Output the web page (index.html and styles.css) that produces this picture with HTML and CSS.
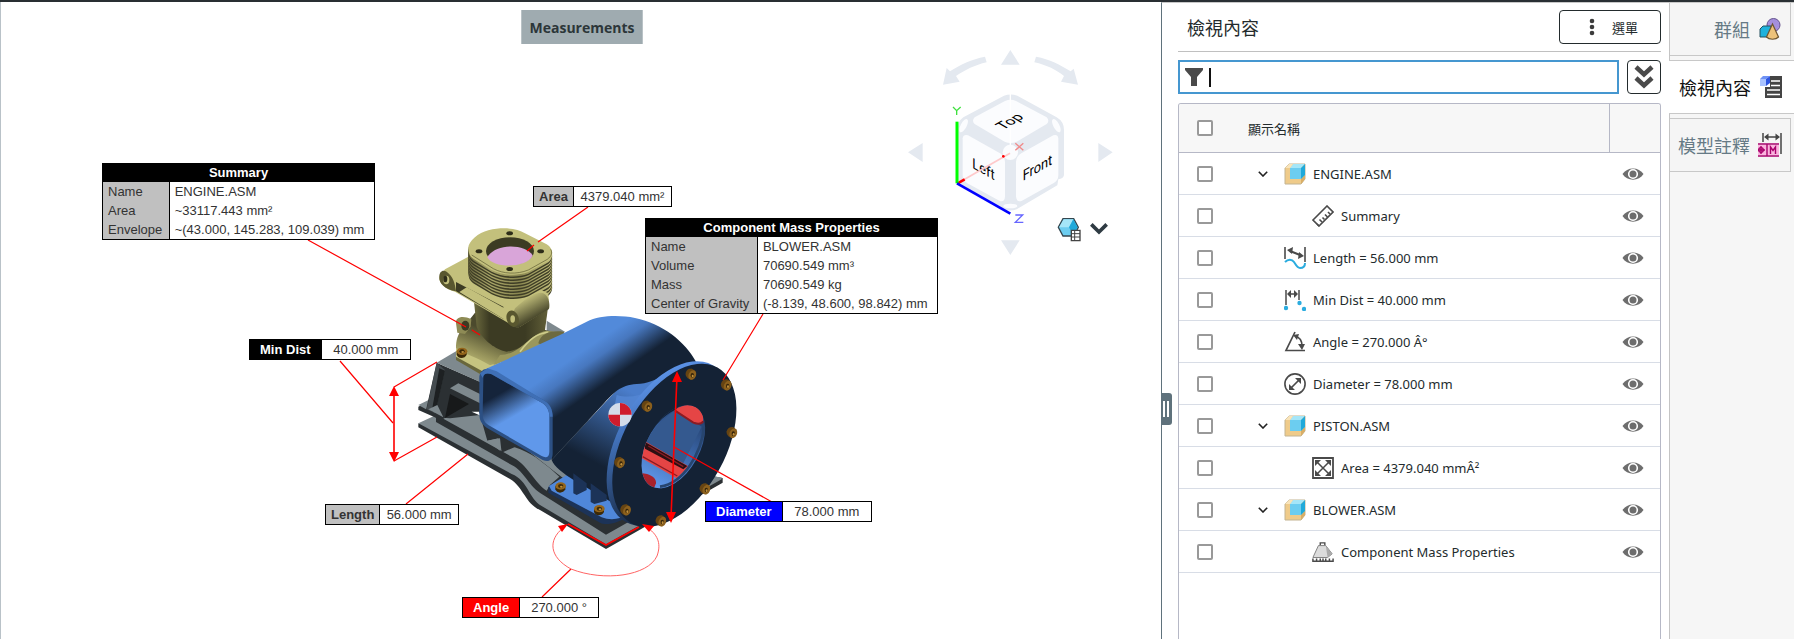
FILE: index.html
```html
<!DOCTYPE html>
<html lang="zh-Hant">
<head>
<meta charset="utf-8">
<title>檢視內容</title>
<link rel="stylesheet" href="styles.css">
</head>
<body>
<svg class="defs" aria-hidden="true">
  <symbol id="i-asm" viewBox="0 0 22 22">
    <path d="M1 5 5 1h16v15l-4 5H1z" fill="#efcb8a" stroke="#c3b492"/>
    <path d="M17 16l4-4v4l-4 5z" fill="#d9ae66"/>
    <path d="M6 5 9 1h12l-4 4z" fill="#a5e6f8"/>
    <path d="M6 5h11v11H6z" fill="#6ccdf0"/>
    <path d="M17 5l4-4v11l-4 4z" fill="#1fa9da"/>
    <path d="M1 5 5 1h4L6 5z" fill="#f9e4ba"/>
  </symbol>
  <symbol id="i-ruler" viewBox="0 0 22 22">
    <g fill="none" stroke="#4a4a4a" stroke-width="1.6">
      <path d="M1 15 15 1l6 6L7 21z"/>
      <path d="M7 21l-2-2M10 17l-2.500-2.500M12.500 14.500l-2-2M15.500 12l-2.500-2.500M18 9l-2-2" />
    </g>
  </symbol>
  <symbol id="i-length" viewBox="0 0 22 22">
    <path d="M1 0v12M21 0v15" stroke="#4a4a4a" stroke-width="1.6"/>
    <path d="M6 4l10 4" stroke="#4a4a4a" stroke-width="2"/>
    <path d="M3 3l6-3-1 7zM20 9l-6 3 1-7z" fill="#4a4a4a"/>
    <path d="M1 15c3-3 7-3 9 0s3 6 6 6 5-2 5-5" fill="none" stroke="#2bacdf" stroke-width="2"/>
  </symbol>
  <symbol id="i-dist" viewBox="0 0 22 22">
    <path d="M2 1v15M15 1v10M5 5h8" stroke="#4a4a4a" stroke-width="1.5"/>
    <path d="M3 5l4-4v8zM14 5l-4-4v8z" fill="#4a4a4a"/>
    <g fill="#2bacdf"><circle cx="2" cy="19" r="2.200"/><circle cx="15.500" cy="14" r="2.200"/><circle cx="20" cy="20" r="2.200"/></g>
  </symbol>
  <symbol id="i-angle" viewBox="0 0 22 22">
    <path d="M11 1 2 19.500h19" fill="none" stroke="#4a4a4a" stroke-width="1.7"/>
    <path d="M11 5c4 1 7 4 7 10" fill="none" stroke="#4a4a4a" stroke-width="1.7"/>
    <path d="M9 4l6-1-2 6zM14 13h7l-3 6z" fill="#4a4a4a"/>
  </symbol>
  <symbol id="i-diameter" viewBox="0 0 22 22">
    <circle cx="11" cy="11" r="10.100" fill="none" stroke="#4a4a4a" stroke-width="1.6"/>
    <path d="M7 15l8-8" stroke="#4a4a4a" stroke-width="1.7"/>
    <path d="M17 5v6l-6-6zM5 17v-6l6 6z" fill="#4a4a4a"/>
  </symbol>
  <symbol id="i-area" viewBox="0 0 22 22">
    <path d="M1 1h20v20H1z" fill="none" stroke="#4a4a4a" stroke-width="1.8"/>
    <path d="M5 5l12 12M17 5 5 17" stroke="#4a4a4a" stroke-width="1.5"/>
    <path d="M3 3h6L3 9zM19 3v6l-6-6zM3 19v-6l6 6zM19 19h-6l6-6z" fill="#4a4a4a"/>
  </symbol>
  <symbol id="i-mass" viewBox="0 0 24 22">
    <path d="M9 4V1h5v3" fill="none" stroke="#4a4a4a" stroke-width="1.5"/>
    <path d="M7 4h8l7 9-5 4H1z" fill="#dcdcdc" stroke="#7a7a7a"/>
    <path d="M15 4l7 9-5 4z" fill="#ababab"/>
    <path d="M1 18v3h22v-3M5 18v3M9 18v3M12 18v3M15 18v3M19 18v3" fill="none" stroke="#4a4a4a" stroke-width="1.6"/>
  </symbol>
  <symbol id="i-eye" viewBox="0 0 22 14">
    <path d="M.5 7C5-.5 17-.5 21.500 7 17 14.500 5 14.500.5 7z" fill="#6d6d6d"/>
    <circle cx="11" cy="7" r="4.300" fill="none" stroke="#fff" stroke-width="1.6"/>
  </symbol>
  <symbol id="i-chev" viewBox="0 0 10 6">
    <path d="M.8.8 5 5 9.200.8" fill="none" stroke="#222" stroke-width="1.6"/>
  </symbol>
  <symbol id="bolt" viewBox="-18 -18 36 36">
    <path d="M-16-4v10c2 6 8 10 14 10s14-4 16-10V-4z" fill="#3c2907"/>
    <ellipse cy="-4" rx="16" ry="11" fill="#94651b"/>
    <ellipse cy="-4" rx="8" ry="6" fill="#3c2907"/>
    <ellipse cx="2" cy="-2" rx="4" ry="3" fill="#c1913c"/>
  </symbol>
  <symbol id="screw" viewBox="-18 -18 36 36">
    <path d="M-15-4C-13-14-4-18 4-17L15-9 3 16C-8 16-17 6-15-4z" fill="#664412"/>
    <ellipse cx="5" cy="2" rx="11" ry="15" transform="rotate(24 5 2)" fill="#8b601d"/>
    <ellipse cx="5" cy="3" rx="5" ry="7" fill="#35240a"/>
    <ellipse cx="6" cy="5" rx="3" ry="4" fill="#c1913c"/>
  </symbol>
</svg>

<div class="app">
  <main class="viewer">
    <button class="mode" type="button">Measurements</button>

    <svg class="scene" viewBox="0 2 1161 637" role="img" aria-label="ENGINE.ASM">
      <defs>
        <linearGradient id="scroll" gradientUnits="userSpaceOnUse" x1="545" y1="515" x2="612" y2="612">
          <stop offset="0" stop-color="#528ada"/><stop offset=".35" stop-color="#4777be"/><stop offset="1" stop-color="#142235"/>
        </linearGradient>
        <linearGradient id="cone" gradientUnits="userSpaceOnUse" x1="700" y1="640" x2="590" y2="850">
          <stop offset="0" stop-color="#4a7dcb"/><stop offset=".4" stop-color="#34598f"/><stop offset="1" stop-color="#142235"/>
        </linearGradient>
        <linearGradient id="duct" gradientUnits="userSpaceOnUse" x1="300" y1="640" x2="340" y2="710">
          <stop offset="0" stop-color="#15243b"/><stop offset="1" stop-color="#6098ea"/>
        </linearGradient>
        <linearGradient id="rim" gradientUnits="userSpaceOnUse" x1="850" y1="560" x2="640" y2="860">
          <stop offset="0" stop-color="#5e95ea"/><stop offset=".35" stop-color="#4272bb"/><stop offset="1" stop-color="#1b2f4d"/>
        </linearGradient>
        <linearGradient id="bore" gradientUnits="userSpaceOnUse" x1="900" y1="690" x2="770" y2="920">
          <stop offset="0" stop-color="#203a63"/><stop offset=".5" stop-color="#3b66a8"/><stop offset="1" stop-color="#6098ea"/>
        </linearGradient>
        <linearGradient id="column" gradientUnits="userSpaceOnUse" x1="225" y1="0" x2="440" y2="0">
          <stop offset="0" stop-color="#6a683d"/><stop offset=".2" stop-color="#3c3b23"/><stop offset=".7" stop-color="#3c3b23"/><stop offset="1" stop-color="#5f5d37"/>
        </linearGradient>
        <linearGradient id="crank" gradientUnits="userSpaceOnUse" x1="230" y1="440" x2="190" y2="535">
          <stop offset="0" stop-color="#4c4a2d"/><stop offset=".7" stop-color="#98955c"/><stop offset="1" stop-color="#b7b472"/>
        </linearGradient>
        <linearGradient id="arm" gradientUnits="userSpaceOnUse" x1="380" y1="350" x2="415" y2="415">
          <stop offset="0" stop-color="#c3c07c"/><stop offset="1" stop-color="#3c3b23"/>
        </linearGradient>
        <linearGradient id="finfill" gradientUnits="userSpaceOnUse" x1="205" y1="0" x2="458" y2="0">
          <stop offset="0" stop-color="#6d6a40"/><stop offset=".25" stop-color="#aaa76a"/><stop offset=".6" stop-color="#88854f"/><stop offset="1" stop-color="#c3c07c"/>
        </linearGradient>
        <path id="finshape" d="M205 205C204 185 235 158 265 151C310 140 350 145 375 160L440 193C460 205 462 228 445 242L385 276C350 290 305 285 275 270L222 238C208 228 206 220 205 205Z"/>
        <g id="fin"><use href="#finshape" y="5" fill="#3f3e26"/><use href="#finshape" fill="url(#finfill)"/></g>
      </defs>

      <g transform="translate(400 180) scale(.33333)">
        <path d="M55 730V742L330 897C370 920 375 970 420 990L618 1107 968 908V894Z" fill="#2b3033"/>
        <path d="M55 730 110 704 500 690 900 880 965 893V898L618 1093 425 978C385 955 385 902 335 882Z" fill="#7e898e"/>
        <path d="M55 680 110 650 240 690V760L140 723 118 718 55 690Z" fill="#2b3033"/>
        <path d="M55 675 110 648 150 690 130 716Z" fill="#7e898e"/>
        <path d="M108 710V726L335 855C375 875 385 920 430 945L618 1064 745 992 618 990 470 880 240 700Z" fill="#2b3033"/>
        <path d="M130 716 225 672 260 700 340 800C400 820 425 845 450 865L478 890 450 915 440 932C405 910 380 850 335 830Z" fill="#7e898e"/>
        <path d="M110 548 240 605V705L150 715 105 712 78 690Z" fill="#2b3033"/>
        <path d="M110 548 80 688 105 700 135 570Z" fill="#454c50"/>
        <path d="M118 565 135 572 108 690 95 695Z" fill="#1d2022"/>
        <path d="M110 548 168 514 250 560 240 606Z" fill="#7e898e"/>
        <path d="M150 625 175 610 240 642V670Z" fill="#7e898e"/>
        <path d="M150 642 207 672 135 714Z" fill="#17191a"/>
        <path d="M85 688 112 675 130 712Z" fill="#7e898e"/>
        <path d="M240 705 262 782 300 775 305 818 352 798 330 750Z" fill="#2b3033"/>
        <path d="M262 782 295 775 300 812Z" fill="#7e898e"/>
        <path d="M215 695h22l5 12z" fill="#fff"/>
        <path d="M440 422 495 455 440 480Z" fill="#7e898e"/>

        <path d="M168 505 168 535 240 580 300 550V510Z" fill="#c6c480"/>
        <path d="M168 530 168 540 240 582 250 575Z" fill="#69673c"/>
        <path d="M168 505C168 455 190 445 225 398H435V450L500 465 385 520 270 556C235 535 190 520 168 505Z" fill="url(#crank)"/>
        <path d="M168 430C165 410 190 405 214 418L212 440 195 462 172 458Z" fill="#8e8b55"/>
        <ellipse cx="196" cy="437" rx="12" ry="15" fill="#3c3b23"/>
        <path d="M222 365 230 440C245 480 290 510 320 515C360 510 420 470 435 450L445 375Z" fill="url(#column)"/>
        <path d="M300 525C360 525 390 460 440 452L495 460 385 520 280 555Z" fill="#9a975d"/>
        <path d="M360 515C390 475 410 462 445 456" fill="none" stroke="#d0ce8c" stroke-width="5"/>
        <path d="M415 490C420 460 455 450 490 455L500 464 430 497Z" fill="#6d6a40"/>
        <use href="#bolt" x="168" y="500" width="36" height="36"/>

        <use href="#fin" y="100"/><use href="#fin" y="90"/><use href="#fin" y="80"/>
        <path d="M135 268 205 230 445 340 448 385 360 440C350 445 340 440 330 432L165 335C130 325 115 305 118 290Z" fill="#c3c07c"/>
        <path d="M118 290C118 275 128 268 140 275C160 290 165 310 168 334C135 328 116 310 118 290Z" fill="#59572f"/>
        <ellipse cx="139" cy="300" rx="9" ry="13" fill="#c3c07c"/><ellipse cx="136" cy="297" rx="6" ry="10" fill="#2d2c19"/>
        <path d="M168 306 310 380 312 418 168 334Z" fill="#3c3b23"/>
        <path d="M200 322 312 384V418L178 336Z" fill="#c3c07c"/>
        <path d="M345 385C365 365 410 330 430 340S450 380 446 388L358 442C350 446 335 440 326 430Z" fill="url(#arm)"/>
        <ellipse cx="338" cy="416" rx="18" ry="25" transform="rotate(-18 338 416)" fill="#59572f"/>
        <ellipse cx="338" cy="417" rx="7" ry="11" fill="#c3c07c"/>
        <use href="#fin" y="68"/><use href="#fin" y="59"/><use href="#fin" y="50"/><use href="#fin" y="41"/>
        <use href="#fin" y="32"/><use href="#fin" y="23"/><use href="#fin" y="14"/><use href="#fin" y="5"/>
        <use href="#finshape" fill="#c3c07c"/>
        <path d="M215 225 280 266C310 282 350 284 385 270L442 238C455 228 458 218 452 208" fill="none" stroke="#59572f" stroke-width="2"/>
        <ellipse cx="330" cy="213" rx="72" ry="41" fill="#3c3b23"/>
        <path d="M262 232C285 190 375 190 398 226C385 264 280 268 262 232Z" fill="#d9a5d9"/>
        <g fill="#2d2c19"><ellipse cx="329" cy="160" rx="10" ry="6"/><ellipse cx="237" cy="214" rx="10" ry="6"/><ellipse cx="422" cy="214" rx="10" ry="6"/><ellipse cx="329" cy="267" rx="10" ry="6"/></g>

        <path d="M445 920V938L600 1028C620 1038 650 1030 690 1008V960Z" fill="#1c3358"/>
        <path d="M447 918 505 882 660 960 690 1000C660 1020 630 1022 605 1012L455 932Z" fill="#4f87da"/>
        <path d="M455 840C470 880 560 920 640 970L760 900 890 550 780 540 650 630Z" fill="url(#cone)"/>
        <path d="M520 880 560 910V930L530 945 520 940ZM572 910 620 945V962L583 972 572 966Z" fill="#1c3358"/>
        <path d="M240 580 262 565 480 465 560 425C600 405 660 405 705 414C790 432 855 485 888 545C835 560 770 610 710 612C660 615 640 640 610 672L455 840 430 690Z" fill="url(#scroll)"/>
        <path d="M650 645C700 660 760 640 800 585C830 560 870 550 900 548L760 640 690 720 640 700Z" fill="#5486d4" opacity=".85"/>
        <path d="M238 600C236 575 250 563 268 568L430 660C450 670 458 690 458 710V820C458 842 445 848 428 840L260 743C244 732 238 722 238 700Z" fill="#2c5084"/>
        <path d="M250 594C250 580 262 578 275 583L420 665C440 675 448 690 448 710V815C448 832 438 835 425 828L265 735C252 727 248 715 248 700Z" fill="url(#duct)"/>
        <path d="M240 580 262 565 290 574 430 660C450 670 458 690 458 710L448 710C448 690 440 675 420 665L275 583C262 578 250 580 248 594Z" fill="#3f6fb5"/>

        <ellipse cx="808" cy="791" rx="269" ry="155" transform="rotate(-61 808 791)" fill="url(#rim)"/>
        <ellipse cx="823" cy="796" rx="267" ry="153" transform="rotate(-61 823 796)" fill="#142235"/>
        <clipPath id="boreclip"><ellipse cx="820" cy="800" rx="136" ry="79" transform="rotate(-61 820 800)"/></clipPath>
        <g clip-path="url(#boreclip)">
          <path d="M700 640H940V960H700Z" fill="url(#bore)"/>
          <path d="M700 640H880L825 690C790 705 755 745 735 790L700 860Z" fill="#142235"/>
          <path d="M825 690C770 730 740 770 735 800L850 850 905 740Z" fill="#34598f"/>
          <path d="M720 775 868 860 830 895 700 820Z" fill="#e54545"/>
          <path d="M735 786 862 858 850 868 735 806Z" fill="#2c0f12"/>
          <path d="M745 798 850 860M728 830 832 888" stroke="#8c1b22" stroke-width="4"/>
          <path d="M700 880C740 875 770 890 768 910L760 930 700 940Z" fill="#a8222b"/>
          <path d="M825 690C860 660 920 680 908 728C890 735 860 720 825 690Z" fill="#e54545"/>
          <path d="M825 692 880 728C895 734 905 732 910 724" fill="none" stroke="#8c1b22" stroke-width="6"/>
          <path d="M912 740C905 820 850 910 780 920" fill="none" stroke="#27456f" stroke-width="8"/>
        </g>
        <g>
          <use href="#screw" x="854" y="565" width="36" height="36"/><use href="#screw" x="960" y="597" width="36" height="36"/>
          <use href="#screw" x="722" y="661" width="36" height="36"/><use href="#screw" x="977" y="740" width="36" height="36"/>
          <use href="#screw" x="640" y="830" width="36" height="36"/><use href="#screw" x="896" y="909" width="36" height="36"/>
          <use href="#screw" x="658" y="972" width="36" height="36"/><use href="#screw" x="764" y="1005" width="36" height="36"/>
          <use href="#bolt" x="464" y="904" width="36" height="36"/><use href="#bolt" x="580" y="972" width="36" height="36"/>
        </g>
        <circle cx="660" cy="704" r="35" fill="#d3dcea"/>
        <path d="M660 704V669A35 35 0 0 1 695 704ZM660 704V739A35 35 0 0 1 625 704Z" fill="#cf1c2d"/>
      </g>

      <g stroke="#f00" stroke-width="1.200" fill="none">
        <path d="M308 240 466 327M472 330 480 335M588 207 538 242M534 245 527 251M763 314 723 380M340 361 393 423M394 387 437 362M394 461 437 437M406 504 468 454M674 447 772 502M542 597 571 569"/>
        <path d="M394 390V457M677 376 671 517M568 524 606 545 639 527" stroke-width="1.600"/>
        <path d="M563 528C548 540 549 557 571 569C604 582 648 576 657 556C661 545 659 536 648 528" stroke="#ff6464" stroke-width="1"/>
      </g>
      <path d="M394 386 399 396H389ZM394 462 389 452H399ZM677 371 682 382H672ZM671 523 666 512H676ZM568 524 562 532 558 526ZM642 524 654 526 649 532Z" fill="#f00"/>
    </svg>

    <table class="note note-summary">
      <thead><tr><th colspan="2">Summary</th></tr></thead>
      <tbody>
        <tr><th>Name</th><td>ENGINE.ASM</td></tr>
        <tr><th>Area</th><td>~33117.443 mm²</td></tr>
        <tr><th>Envelope</th><td>~(43.000, 145.283, 109.039) mm</td></tr>
      </tbody>
    </table>
    <table class="note note-mass">
      <thead><tr><th colspan="2">Component Mass Properties</th></tr></thead>
      <tbody>
        <tr><th>Name</th><td>BLOWER.ASM</td></tr>
        <tr><th>Volume</th><td>70690.549 mm³</td></tr>
        <tr><th>Mass</th><td>70690.549 kg</td></tr>
        <tr><th>Center of Gravity</th><td>(-8.139, 48.600, 98.842) mm</td></tr>
      </tbody>
    </table>
    <div class="tag tag-area"><b>Area</b><span>4379.040 mm²</span></div>
    <div class="tag tag-dist"><b>Min Dist</b><span>40.000 mm</span></div>
    <div class="tag tag-length"><b>Length</b><span>56.000 mm</span></div>
    <div class="tag tag-diameter"><b>Diameter</b><span>78.000 mm</span></div>
    <div class="tag tag-angle"><b>Angle</b><span>270.000 °</span></div>

    <svg class="navcube" viewBox="0 0 780 720" role="img" aria-label="Top, Left, Front">
      <g fill="#e4e9f0">
        <path d="M391 60 419 104H363ZM391 675 363 631H419ZM84 367 128 339V396ZM698 367 655 339V396Z"/>
        <path d="M189 164 200 114 210 124C240 104 275 88 315 80L320 97C285 105 255 120 228 138L239 155ZM594 164 581 116 572 124C540 104 510 88 468 80L463 97C500 105 530 120 552 138L543 155Z"/>
        <path d="M372 197Q392 190 412 197L530 262Q552 275 552 300V435Q550 446 535 448L532 466 410 538Q392 545 372 538L250 468 232 450V300Q232 275 250 262Z"/>
      </g>
      <g fill="#fbfcfe">
        <path d="M375 213Q392 205 408 213L500 262Q510 272 500 282L410 335Q392 343 374 335L284 282Q274 272 284 262Z"/>
        <path d="M248 325Q250 312 264 316L360 370Q375 380 375 396V500Q373 518 358 512L262 460Q248 452 248 436Z"/>
        <path d="M535 325Q533 312 520 316L424 370Q408 380 408 396V500Q410 518 426 512L520 460Q535 452 535 436Z"/>
        <circle cx="391" cy="367" r="23"/><ellipse cx="391" cy="528" rx="21" ry="7"/>
        <ellipse cx="251" cy="287" rx="9" ry="22" transform="rotate(28 251 287)"/><ellipse cx="529" cy="287" rx="9" ry="22" transform="rotate(-28 529 287)"/>
      </g>
      <path d="M391 192V345" stroke="#fff" stroke-width="4"/>
      <g class="face">
        <text transform="matrix(.87 -.5 .87 .5 370 300)">Top</text>
        <text transform="matrix(.87 .5 0 1 277 413)">Left</text>
        <text transform="matrix(.87 -.5 0 1 428 453)">Front</text>
      </g>
      <path d="M233 460 390 370" stroke="#ffc9cb" stroke-width="5"/>
      <path d="M233 460 254 448" stroke="#f00" stroke-width="8"/><circle cx="370" cy="379" r="4" fill="#f00"/>
      <path d="M231 460V275" stroke="#0f0" stroke-width="9"/>
      <path d="M231 460 391 551" stroke="#00f" stroke-width="8"/>
      <g fill="none" stroke-width="4">
        <path d="M219 231 230 242 242 231M230 242V255" stroke="#3fe03f"/>
        <path d="M406 340 430 361M430 340 406 361" stroke="#f08a8a"/>
        <path d="M406 555H428L406 577H430" stroke="#6666ff"/>
      </g>
      <path d="M549 566H581L595 592 581 618H549L535 592Z" fill="#6ccdf0" stroke="#34464f" stroke-width="4"/>
      <path d="M551 568H580L567 592H537Z" fill="#a5e6f8"/><path d="M580 568 593 592 580 616 567 592Z" fill="#1fa9da"/>
      <path d="M574 601H600V632H574Z" fill="#fff" stroke="#444" stroke-width="4"/>
      <path d="M574 611H600M574 621H600M584 601V632" stroke="#444" stroke-width="3"/>
      <path d="M634 583 657 606 680 583" fill="none" stroke="#2f3b43" stroke-width="11"/>
    </svg>
  </main>

  <section class="panel">
    <span class="grip"></span>
    <header class="head">
      <h1>檢視內容</h1>
      <button class="menu" type="button">
        <svg viewBox="0 0 6 18" width="6" height="18"><g fill="#3c3c3c"><circle cx="3" cy="3" r="2.300"/><circle cx="3" cy="9" r="2.300"/><circle cx="3" cy="15" r="2.300"/></g></svg>
        選單
      </button>
    </header>
    <div class="search">
      <label class="field">
        <svg viewBox="0 0 18 18" width="18" height="18"><path d="M0 0H18V2L12 9V18H6V9L0 2Z" fill="#4a4a4a"/></svg>
        <span class="caret"></span>
        <input type="text" aria-label="篩選">
      </label>
      <button class="expand" type="button" aria-label="展開">
        <svg viewBox="0 0 20 24" width="20" height="24"><path d="M2 2 10 9.500 18 2M2 13 10 20.500 18 13" fill="none" stroke="#4a4a4a" stroke-width="4.500"/></svg>
      </button>
    </div>
    <div class="grid">
      <table class="tree">
        <colgroup><col class="c-check"><col><col class="c-eye"></colgroup>
        <thead><tr><th><input type="checkbox" aria-label="全選"></th><th>顯示名稱</th><th class="last"></th></tr></thead>
        <tbody>
          <tr><td><input type="checkbox" aria-label="ENGINE.ASM"></td><td><div class="node"><svg class="chev"><use href="#i-chev"/></svg><svg class="ico"><use href="#i-asm"/></svg>ENGINE.ASM</div></td><td><svg class="eye"><use href="#i-eye"/></svg></td></tr>
          <tr><td><input type="checkbox" aria-label="Summary"></td><td><div class="node deep"><svg class="ico"><use href="#i-ruler"/></svg>Summary</div></td><td><svg class="eye"><use href="#i-eye"/></svg></td></tr>
          <tr><td><input type="checkbox" aria-label="Length"></td><td><div class="node leaf"><svg class="ico"><use href="#i-length"/></svg>Length = 56.000 mm</div></td><td><svg class="eye"><use href="#i-eye"/></svg></td></tr>
          <tr><td><input type="checkbox" aria-label="Min Dist"></td><td><div class="node leaf"><svg class="ico"><use href="#i-dist"/></svg>Min Dist = 40.000 mm</div></td><td><svg class="eye"><use href="#i-eye"/></svg></td></tr>
          <tr><td><input type="checkbox" aria-label="Angle"></td><td><div class="node leaf"><svg class="ico"><use href="#i-angle"/></svg>Angle = 270.000 Â°</div></td><td><svg class="eye"><use href="#i-eye"/></svg></td></tr>
          <tr><td><input type="checkbox" aria-label="Diameter"></td><td><div class="node leaf"><svg class="ico"><use href="#i-diameter"/></svg>Diameter = 78.000 mm</div></td><td><svg class="eye"><use href="#i-eye"/></svg></td></tr>
          <tr><td><input type="checkbox" aria-label="PISTON.ASM"></td><td><div class="node"><svg class="chev"><use href="#i-chev"/></svg><svg class="ico"><use href="#i-asm"/></svg>PISTON.ASM</div></td><td><svg class="eye"><use href="#i-eye"/></svg></td></tr>
          <tr><td><input type="checkbox" aria-label="Area"></td><td><div class="node deep"><svg class="ico"><use href="#i-area"/></svg>Area = 4379.040 mmÂ²</div></td><td><svg class="eye"><use href="#i-eye"/></svg></td></tr>
          <tr><td><input type="checkbox" aria-label="BLOWER.ASM"></td><td><div class="node"><svg class="chev"><use href="#i-chev"/></svg><svg class="ico"><use href="#i-asm"/></svg>BLOWER.ASM</div></td><td><svg class="eye"><use href="#i-eye"/></svg></td></tr>
          <tr><td><input type="checkbox" aria-label="Component Mass Properties"></td><td><div class="node deep"><svg class="ico"><use href="#i-mass"/></svg>Component Mass Properties</div></td><td><svg class="eye"><use href="#i-eye"/></svg></td></tr>
        </tbody>
      </table>
    </div>
  </section>

  <nav class="tabs">
    <button class="tab" type="button">群組
      <svg viewBox="0 0 24 24" width="24" height="24">
        <circle cx="15.500" cy="8" r="6.500" fill="#a48fdc" stroke="#65538f"/>
        <path d="M2 12 5 9H13V18L11 20H2Z" fill="#1fb2dc" stroke="#24515f"/>
        <path d="M14.500 7 20.500 20C18 23 11 23 8.500 20Z" fill="#edc27a" stroke="#6f5631" stroke-width="1.200"/>
      </svg>
    </button>
    <button class="tab active" type="button">檢視內容
      <svg viewBox="0 0 24 24" width="24" height="24">
        <path d="M11 1H23V23H6V12H11Z" fill="#444"/>
        <path d="M12 6H21M12 10.500H21M8 15H21M8 19.500H21" stroke="#fff" stroke-width="1.500"/>
        <path d="M1 4H7V11H1Z" fill="#a9c3ff"/><path d="M1 4 4 1H11L7 4Z" fill="#6f92f5"/><path d="M7 4 11 1V8L7 11Z" fill="#2d55e0"/>
      </svg>
    </button>
    <button class="tab" type="button">模型註釋
      <svg viewBox="0 0 24 24" width="24" height="24">
        <path d="M5 0V9M23 0V21M8 4H20" stroke="#444" stroke-width="1.500" fill="none"/>
        <path d="M6 4 10.500.5V7.500ZM22 4 17.500.5V7.500Z" fill="#444"/>
        <path d="M0 12H21V22H0Z" fill="#fbb4de"/><path d="M0 11H21M0 23H21" stroke="#a8006c" stroke-width="1.600"/>
        <path d="M9 11V23M0 17H7M3 13V21M12.500 21V14L15 17.500 17.500 14V21" fill="none" stroke="#a8006c" stroke-width="1.400"/><circle cx="3" cy="17" r="2.300" fill="none" stroke="#a8006c" stroke-width="1.300"/>
      </svg>
    </button>
  </nav>
</div>
</body>
</html>
```

FILE: styles.css
```css
* { box-sizing: border-box; }

body {
  margin: 0;
  font-family: "Noto Sans", "Noto Sans CJK TC", sans-serif;
  font-size: 13px;
  color: #232b2d;
  background: #fff;
}

button { font: inherit; color: inherit; padding: 0; cursor: pointer; }
svg { flex: none; }
.defs { position: absolute; width: 0; height: 0; }

.app {
  display: flex;
  height: 100vh;
  border-top: 2px solid #292f33;
  overflow: hidden;
}

/* 3D viewer */
.viewer {
  position: relative;
  flex: 1;
  min-width: 0;
  overflow: hidden;
  border-left: 1px solid #b9c2c8;
  padding-left: 2px;
  text-align: center;
}

.mode {
  position: relative;
  z-index: 1;
  height: 34px;
  margin-top: 8px;
  padding: 0 8px;
  border: 1px solid #b9c2c6;
  border-width: 0 1px;
  background: #9fabb0;
  color: #2c3639;
  font-family: "Open Sans", sans-serif;
  font-size: 14px;
  font-weight: 700;
}

.scene {
  position: absolute;
  left: -1px;
  top: 0;
  width: 1161px;
  height: 637px;
}

.navcube {
  position: absolute;
  right: 21px;
  top: 28px;
  width: 260px;
  height: 240px;
}

.face { font: 44px Roboto, sans-serif; fill: #000; }

.note, .tag {
  position: absolute;
  font-family: "Liberation Sans", Arial, sans-serif;
  font-size: 13px;
  line-height: 19px;
  color: #333;
  background: #fff;
  border: 1px solid #000;
  white-space: nowrap;
  text-align: left;
}

.note { border-collapse: collapse; }
.note th, .note td { padding: 0 5px; }
.note tbody th { background: #c0c0c0; font-weight: 400; border-right: 1px solid #000; }
.note thead th { background: #000; color: #fff; text-align: center; line-height: 18px; }
.note-summary { left: 101px; top: 161px; width: 273px; }
.note-mass { left: 644px; top: 216px; width: 293px; }

.tag { display: flex; text-align: center; }
.tag b { padding: 0 5px; background: #c0c0c0; border-right: 1px solid #000; }
.tag span { flex: 1; }
.tag-area { left: 532px; top: 184px; width: 139px; }
.tag-dist { left: 248px; top: 337px; width: 162px; }
.tag-dist b { padding: 0 10px; background: #000; color: #fff; }
.tag-length { left: 324px; top: 502px; width: 134px; }
.tag-diameter { left: 704px; top: 499px; width: 167px; }
.tag-diameter b { padding: 0 10px; background: #00f; color: #fff; }
.tag-angle { left: 461px; top: 595px; width: 137px; }
.tag-angle b { padding: 0 10px; background: #f00; color: #fff; }

/* Content panel */
.panel {
  position: relative;
  flex: 0 0 508px;
  display: flex;
  flex-direction: column;
  padding: 0 8px 0 16px;
  border-left: 1px solid #5f727c;
  border-top: 1px solid #c8c8c8;
}

.grip {
  position: absolute;
  left: -1px;
  top: 390px;
  width: 11px;
  height: 32px;
  border-radius: 0 3px 3px 0;
  background: #5f727c;
}

.grip::before {
  content: "";
  position: absolute;
  left: 2px;
  top: 8px;
  width: 2px;
  height: 16px;
  border: solid #fff;
  border-width: 0 2px;
}

.head {
  display: flex;
  justify-content: space-between;
  align-items: center;
  height: 49px;
  padding-left: 9px;
  border-bottom: 1px solid #c0c0c0;
}

.head h1 { margin: 0; font-size: 18px; font-weight: 400; }

.menu {
  display: flex;
  align-items: center;
  justify-content: center;
  gap: 17px;
  width: 102px;
  height: 34px;
  padding-left: 7px;
  border: 1px solid #232b2d;
  border-radius: 4px;
  background: #fff;
}

.search { display: flex; gap: 8px; margin: 8px 0; height: 34px; }

.field {
  flex: 1;
  display: flex;
  align-items: center;
  gap: 6px;
  padding: 0 5px;
  border: 2px solid #4597d0;
}

.field input { flex: 1; min-width: 0; border: 0; outline: 0; font: inherit; }
.caret { width: 2px; height: 19px; background: #111; }

.expand {
  display: grid;
  place-items: center;
  width: 34px;
  border: 1px solid #232b2d;
  border-radius: 4px;
  background: #fff;
}

.grid {
  flex: 1;
  min-height: 0;
  overflow: hidden;
  margin-top: 1px;
  border: 1px solid #b6b8c6;
  border-bottom: 0;
  border-radius: 3px 3px 0 0;
}

.tree { width: 100%; border-collapse: separate; border-spacing: 0; table-layout: fixed; }
.c-check { width: 69px; }
.c-eye { width: 51px; }
.tree th, .tree td { height: 42px; padding: 0; border-bottom: 1px solid #d8dde6; text-align: left; }
.tree th { height: 49px; background: #f7f7f7; border-color: #b6b8c6; font-weight: 400; }
.tree th.last { border-left: 1px solid #b6b8c6; }
.tree td:last-child { padding-left: 13px; }

.tree input {
  display: block;
  appearance: none;
  width: 16px;
  height: 16px;
  margin: 0 0 0 18px;
  border: 2px solid #999;
  border-radius: 2px;
  background: #fff;
}

.node { display: flex; align-items: center; padding-left: 10px; }
.node.leaf { padding-left: 36px; }
.node.deep { padding-left: 64px; }
.chev { width: 10px; height: 6px; margin-right: 16px; }
.ico { width: 22px; height: 22px; margin-right: 7px; }
.eye { display: block; width: 22px; height: 14px; }

/* Side tabs */
.tabs {
  flex: 0 0 125px;
  display: flex;
  flex-direction: column;
  align-items: flex-start;
  gap: 4px;
  background: #f6f6f6;
  border-left: 1px solid #c4c4c4;
  border-top: 1px solid #c8c8c8;
}

.tab {
  display: flex;
  align-items: center;
  justify-content: flex-end;
  gap: 8px;
  width: 121px;
  height: 54px;
  padding-right: 8px;
  border: 1px solid #c8c8c8;
  border-left: 0;
  background: #f5f5f5;
  color: #667a85;
  font-size: 18px;
}

.tab:first-child { border-top: 0; height: 53px; }

.tab.active {
  width: calc(100% + 1px);
  margin-left: -1px;
  padding-right: 11px;
  border-right: 0;
  background: #fff;
  color: #111;
}
```
